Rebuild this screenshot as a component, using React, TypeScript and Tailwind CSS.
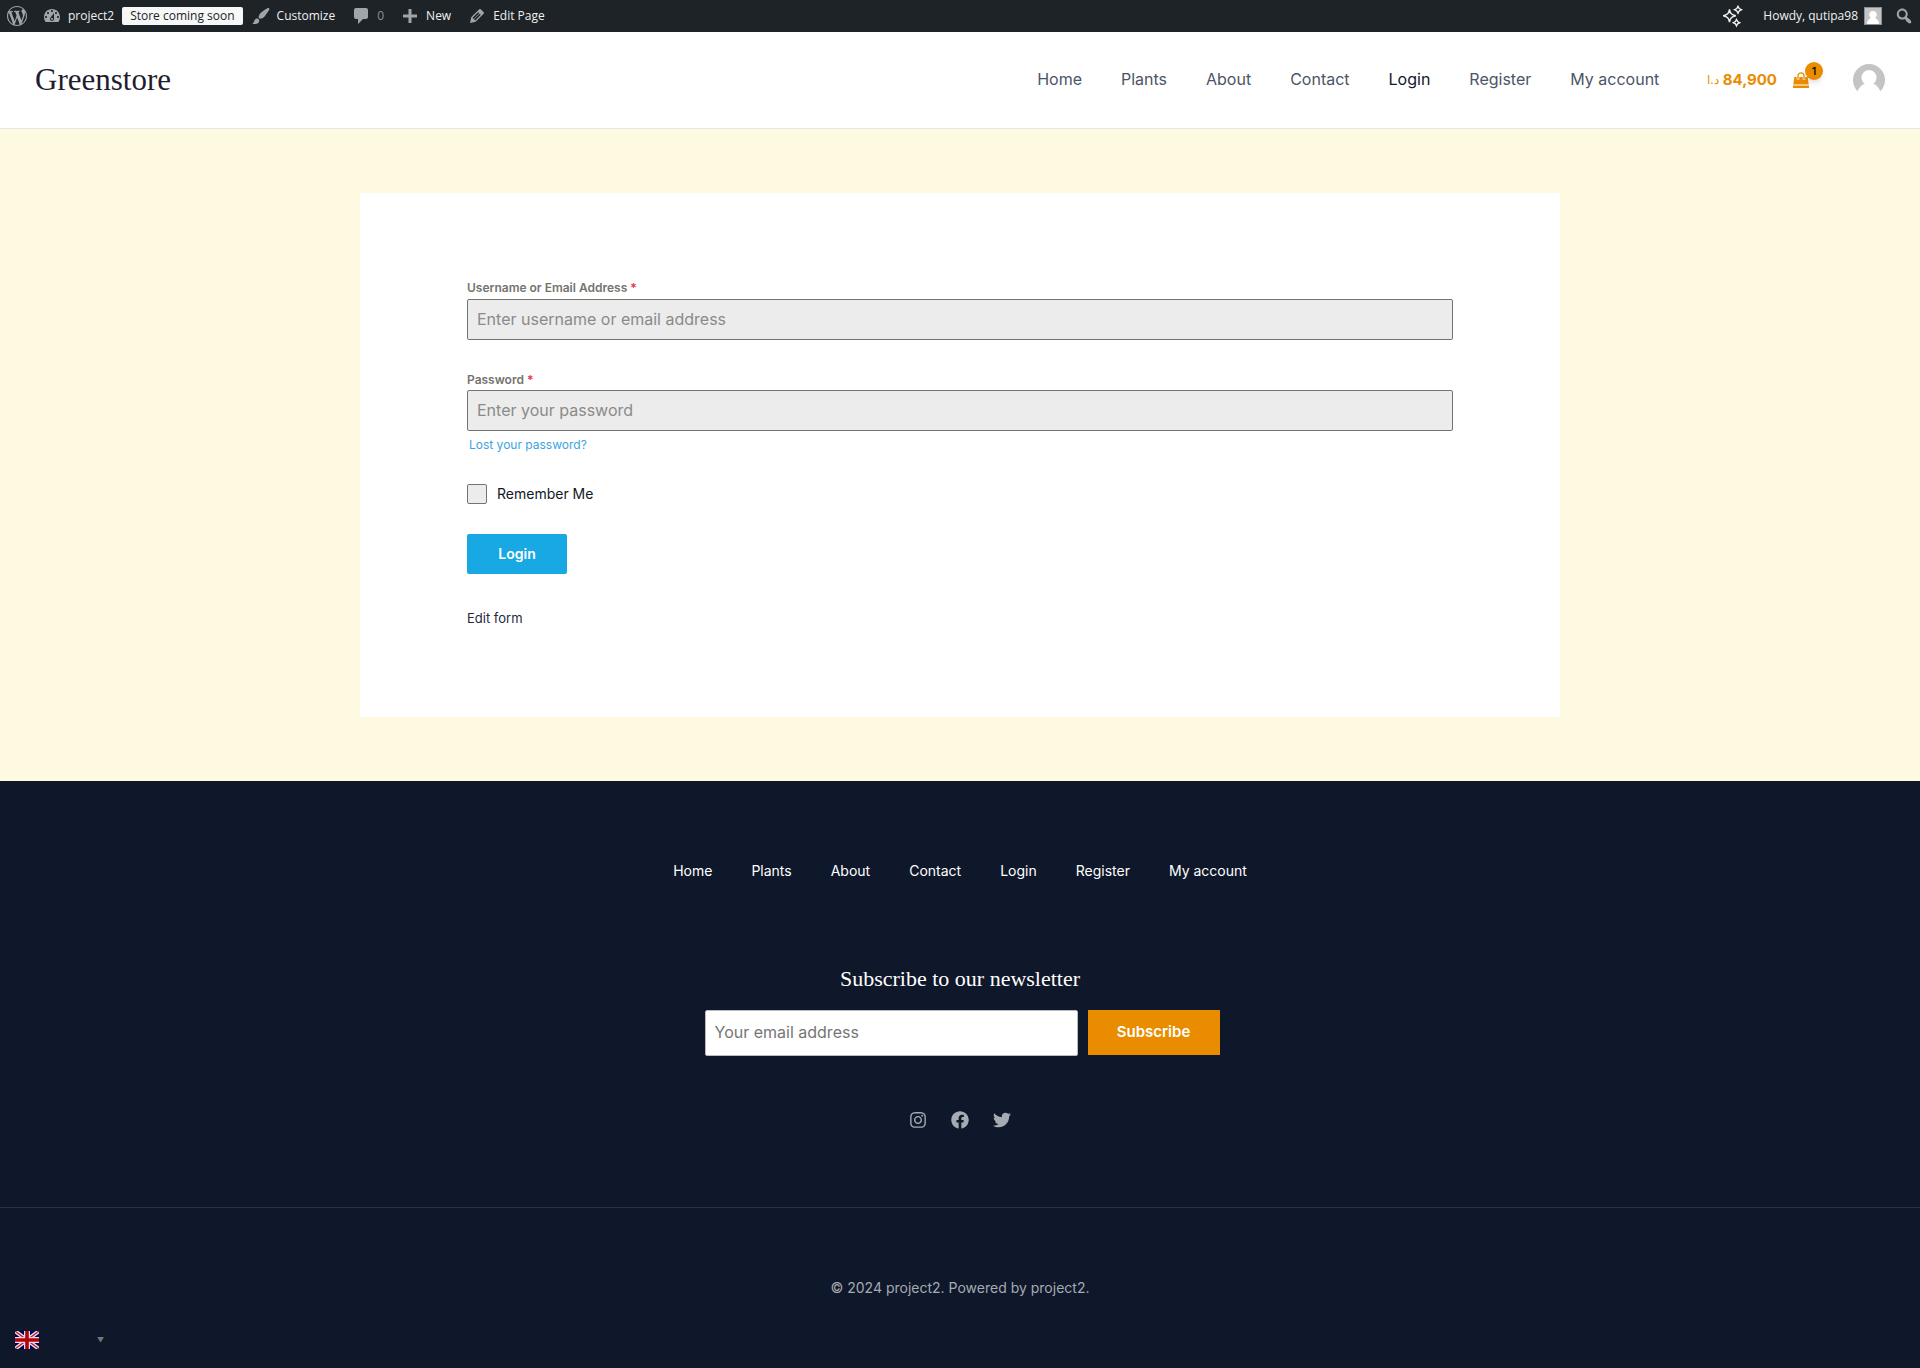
import React, { type ReactNode } from "react";
import { FaFacebook, FaInstagram, FaTwitter } from "react-icons/fa";

const PAGES = ["Home", "Plants", "About", "Contact", "Login", "Register", "My account"];

const ICONS = {
  wordpress:
    "M20 10c0-5.51-4.49-10-10-10C4.48 0 0 4.49 0 10c0 5.52 4.48 10 10 10 5.51 0 10-4.48 10-10zM7.78 15.37L4.37 6.22c.55-.02 1.17-.08 1.17-.08.5-.06.44-1.13-.06-1.11 0 0-1.45.11-2.37.11-.18 0-.37 0-.58-.01C4.12 2.69 6.87 1.11 10 1.11c2.33 0 4.45.87 6.05 2.34-.68-.11-1.65.39-1.65 1.58 0 .74.45 1.36.9 2.1.35.61.55 1.36.55 2.46 0 1.49-1.4 5-1.4 5l-3.03-8.37c.54-.02.82-.17.82-.17.5-.05.44-1.25-.06-1.22 0 0-1.44.12-2.38.12-.87 0-2.33-.12-2.33-.12-.5-.03-.56 1.2-.06 1.22l.92.08 1.26 3.41zM17.41 10c.24-.64.74-1.87.43-4.25.7 1.29 1.05 2.71 1.05 4.25 0 3.29-1.73 6.24-4.4 7.78.97-2.59 1.94-5.2 2.92-7.78zM6.1 18.09C3.12 16.65 1.11 13.53 1.11 10c0-1.3.23-2.48.72-3.59C3.25 10.3 4.67 14.2 6.1 18.09zm4.03-6.63l2.58 6.98c-.86.29-1.76.45-2.71.45-.79 0-1.57-.11-2.29-.33.81-2.38 1.62-4.74 2.42-7.1z",
  dashboard:
    "M3.76 16h12.48c1.1-1.37 1.76-3.11 1.76-5 0-4.42-3.58-8-8-8s-8 3.58-8 8c0 1.89.66 3.63 1.76 5zM10 4c.55 0 1 .45 1 1s-.45 1-1 1-1-.45-1-1 .45-1 1-1zM6 6c.55 0 1 .45 1 1s-.45 1-1 1-1-.45-1-1 .45-1 1-1zm8 0c.55 0 1 .45 1 1s-.45 1-1 1-1-.45-1-1 .45-1 1-1zm-5.37 5.55L12 7v6c0 1.1-.9 2-2 2s-2-.9-2-2c0-.57.24-1.08.63-1.45zM4 10c.55 0 1 .45 1 1s-.45 1-1 1-1-.45-1-1 .45-1 1-1zm12 0c.55 0 1 .45 1 1s-.45 1-1 1-1-.45-1-1 .45-1 1-1zm-5 3c0-.55-.45-1-1-1s-1 .45-1 1 .45 1 1 1 1-.45 1-1z",
  brush:
    "M18.33 3.57s.27-.8-.31-1.36c-.53-.52-1.22-.24-1.22-.24-.61.3-5.76 3.47-7.67 5.57-.86.96-2.06 3.79-1.09 4.82.92.98 3.96-.17 4.79-1 2.06-2.06 5.21-7.17 5.5-7.79zM1.4 17.65c2.37-1.56 1.46-3.41 3.23-4.64.93-.65 2.22-.62 3.08.29.63.67.8 2.57-.16 3.46-1.57 1.45-4 1.55-6.15.89z",
  comment: "M5 2h10c1.1 0 2 .9 2 2v7c0 1.1-.9 2-2 2h-3l-5 5v-5H5c-1.1 0-2-.9-2-2V4c0-1.1.9-2 2-2z",
  plus: "M17 8.500v3h-5.500v5.500h-3v-5.500H3v-3h5.500V3h3v5.500H17z",
  pencil:
    "M13.89 3.39l2.71 2.72c.46.46.42 1.24.03 1.64l-8.01 8.02-5.56 1.16 1.16-5.58s7.6-7.63 7.99-8.03c.39-.39 1.22-.39 1.68.07zm-2.73 2.79l-5.59 5.61 1.11 1.11 5.54-5.65zm-2.97 8.23l5.58-5.6-1.07-1.08-5.59 5.6z",
  search:
    "M12.14 4.18c1.87 1.87 2.11 4.75.72 6.89.12.1.22.21.36.31.2.16.47.36.81.59.34.24.56.39.66.47.42.31.73.57.94.78.32.32.6.65.84 1 .25.35.44.69.59 1.04.14.35.21.68.18 1-.02.32-.14.59-.36.81s-.49.34-.81.36c-.31.02-.65-.04-.99-.19-.35-.14-.7-.34-1.04-.59-.35-.24-.68-.52-1-.84-.21-.21-.47-.52-.77-.93-.1-.13-.25-.35-.47-.66-.22-.32-.4-.57-.56-.78-.16-.2-.29-.35-.44-.5-2.07 1.09-4.69.76-6.44-.98-2.14-2.15-2.14-5.64 0-7.78 2.15-2.15 5.63-2.15 7.78 0zm-1.41 6.36c1.36-1.37 1.36-3.58 0-4.95-1.37-1.37-3.59-1.37-4.95 0-1.37 1.37-1.37 3.58 0 4.95 1.36 1.37 3.58 1.37 4.95 0z",
};

function Glyph({ name }: { name: keyof typeof ICONS }) {
  return (
    <svg viewBox="0 0 20 20" className="size-5 shrink-0 fill-[#a0a5aa]" aria-hidden="true">
      <path d={ICONS[name]} />
    </svg>
  );
}

function BarLink({ icon, label, children }: { icon: keyof typeof ICONS; label?: string; children?: ReactNode }) {
  return (
    <a href="#" aria-label={label} className="flex items-center gap-1.5">
      <Glyph name={icon} />
      {children}
    </a>
  );
}

function AdminBar() {
  return (
    <div className="flex h-8 items-center justify-between bg-[#1d2327] pr-1.5 pl-[7px] font-['Open_Sans',sans-serif] text-xs text-[#f0f0f1]">
      <div className="flex items-center">
        <BarLink icon="wordpress" label="About WordPress" />
        <div className="ml-[15px]">
          <BarLink icon="dashboard">project2</BarLink>
        </div>
        <a href="#" className="ml-2 flex h-[18px] items-center rounded-xs bg-[#f6f7f7] px-2 text-[#1d2327]">
          Store coming soon
        </a>
        <div className="ml-2 flex items-center gap-4">
          <BarLink icon="brush">Customize</BarLink>
          <BarLink icon="comment">
            <span className="text-[#8c9196]">0</span>
          </BarLink>
          <BarLink icon="plus">New</BarLink>
          <BarLink icon="pencil">Edit Page</BarLink>
        </div>
      </div>
      <div className="flex items-center">
        <button type="button" aria-label="Assistant">
          <svg viewBox="0 0 24 24" className="size-6 fill-none stroke-[#f0f0f1] stroke-[1.4]" aria-hidden="true">
            <path d="M9.500 5.500c.8 4 2 5.400 6.300 6.300-4.300.9-5.500 2.300-6.300 6.300-.8-4-2-5.400-6.300-6.300 4.300-.9 5.500-2.300 6.300-6.300z" />
            <path d="M18 2.200l1.200 2.300 2.300 1.200-2.300 1.200L18 9.200l-1.200-2.300-2.300-1.200 2.300-1.200z" />
            <path d="M16.500 15.500l1.100 2.100 2.100 1.100-2.100 1.100-1.100 2.100-1.100-2.100-2.100-1.100 2.100-1.100z" />
          </svg>
        </button>
        <a href="#" className="ml-[19px] flex items-center gap-1.5">
          Howdy, qutipa98
          <Avatar className="size-[18px] border border-[#8c8f94] bg-[#c3c4c7]" square />
        </a>
        <button type="button" aria-label="Search" className="ml-3">
          <Glyph name="search" />
        </button>
      </div>
    </div>
  );
}

function Avatar({ className, square }: { className: string; square?: boolean }) {
  return (
    <svg viewBox="0 0 32 32" className={className} aria-hidden="true">
      <rect width="32" height="32" rx={square ? 0 : 16} fill="#c4c4c4" />
      <path
        fill="#fff"
        d="M16 6a7.500 7.500 0 0 0-7.500 7.500c0 2.800 1.300 5 3.300 6.300C8 21 5.500 25 4.300 28V32h23.400v-4c-1.200-3-3.700-7-7.500-8.200 2-1.300 3.300-3.500 3.300-6.300A7.500 7.500 0 0 0 16 6z"
      />
    </svg>
  );
}

function Header() {
  return (
    <header className="flex h-[97px] items-center justify-between border-b border-[#e2e5ea] bg-white px-[35px]">
      <a href="#" className="font-['Liberation_Serif',serif] text-[31px] text-[#1e1e2e]">
        Greenstore
      </a>
      <div className="flex items-center">
        <nav className="flex gap-[39px] pb-0.5 text-base text-[#4b5566]">
          {PAGES.map((page) => (
            <a key={page} href="#" className={page === "Login" ? "text-[#0f172a]" : ""}>
              {page}
            </a>
          ))}
        </nav>
        <a href="#" className="ml-12 flex items-center gap-4 text-[15px] font-bold text-[#ea8c00]" aria-label="View cart">
          <span className="flex items-center gap-1">
            <span className="text-xs font-normal">د.ا</span>84,900
          </span>
          <span className="relative">
            <svg viewBox="0 0 16 16" className="size-4 fill-[#ea8c00]" aria-hidden="true">
              <path d="M1.300 5h13.400l1 7.500H.3z" />
              <path d="M0 13.500h16V16H0z" />
              <path d="M5 7.500V3.800a3 3 0 0 1 6 0v3.700" fill="none" stroke="#fff" strokeWidth="2.600" />
              <path d="M5 7V3.800a3 3 0 0 1 6 0V7" fill="none" stroke="#ea8c00" strokeWidth="1.300" />
            </svg>
            <span className="absolute -top-2.5 left-3 flex size-[18px] items-center justify-center rounded-full bg-[#ea8c00] text-[11px] font-medium text-black shadow-md">
              1
            </span>
          </span>
        </a>
        <a href="#" aria-label="My profile" className="ml-11">
          <Avatar className="size-8" />
        </a>
      </div>
    </header>
  );
}

const FIELD =
  "block h-[41px] w-full rounded-xs border border-[#74746e] bg-[#ececec] px-[9px] pb-0.5 text-base text-[#333] placeholder:text-[#8a8a8a]";

function LoginForm() {
  return (
    <form className="px-[107px] pt-[87px] pb-[89px]">
      <label htmlFor="user" className="block pb-1 text-xs leading-[15px] font-semibold text-[#74746e]">
        Username or Email Address <span className="text-[#e5344f]">*</span>
      </label>
      <input id="user" type="text" placeholder="Enter username or email address" className={FIELD} />
      <label htmlFor="pass" className="mt-8 block pb-[3px] text-xs leading-[15px] font-semibold text-[#74746e]">
        Password <span className="text-[#e5344f]">*</span>
      </label>
      <input id="pass" type="password" placeholder="Enter your password" className={FIELD} />
      <a href="#" className="mt-1.5 ml-0.5 block w-fit text-xs text-[#3ba4e2]">
        Lost your password?
      </a>
      <label className="mt-[31px] flex w-fit items-center gap-2.5 text-sm text-[#111827]">
        <input type="checkbox" className="size-5 appearance-none rounded-xs border border-[#74746e] bg-[#ececec]" />
        Remember Me
      </label>
      <button type="submit" className="mt-[30px] block h-10 w-[100px] rounded-xs bg-[#18a8e4] text-sm font-semibold text-white">
        Login
      </button>
      <a href="#" className="mt-[34px] block w-fit text-[13px] leading-5 text-[#1e293b]">
        Edit form
      </a>
    </form>
  );
}

function UnionFlag() {
  return (
    <svg viewBox="0 0 24 18" className="h-[18px] w-6" aria-hidden="true">
      <rect width="24" height="18" fill="#00005f" />
      <path d="M0 0l24 18M24 0L0 18" stroke="#e0e0e6" strokeWidth="4" />
      <path d="M0 0l24 18M24 0L0 18" stroke="#c01020" strokeWidth="1.200" />
      <path d="M12 0v18M0 9h24" stroke="#e0e0e6" strokeWidth="6" />
      <path d="M12 0v18M0 9h24" stroke="#b8000c" strokeWidth="3.600" />
    </svg>
  );
}

function Footer() {
  return (
    <footer className="bg-[#0f172a] text-white">
      <nav className="flex justify-center gap-[39px] pt-20 text-sm">
        {PAGES.map((page) => (
          <a key={page} href="#">
            {page}
          </a>
        ))}
      </nav>
      <form className="mt-[81px] flex flex-col items-center">
        <h2 className="font-['Liberation_Serif',serif] text-[22px] leading-[34px]">Subscribe to our newsletter</h2>
        <div className="mt-3.5 flex w-full items-start justify-center gap-2.5 pl-1">
          <input
            type="email"
            aria-label="Your email address"
            placeholder="Your email address"
            className="h-[46px] w-[373px] rounded-xs border border-[#bbb] bg-white px-[9px] pb-0.5 text-base text-[#333] placeholder:text-[#757575]"
          />
          <button type="submit" className="h-[45px] w-[132px] bg-[#ea8c00] text-[15px] font-semibold">
            Subscribe
          </button>
        </div>
      </form>
      <div className="mt-[55px] flex justify-center gap-6 text-[#a6aab2]">
        <a href="#" aria-label="Instagram">
          <FaInstagram size={18} />
        </a>
        <a href="#" aria-label="Facebook">
          <FaFacebook size={18} />
        </a>
        <a href="#" aria-label="Twitter">
          <FaTwitter size={18} />
        </a>
      </div>
      <div className="mt-[78px] border-t border-[#2a3242] pt-[70px] text-center text-sm text-[#a6aab2]">
        © 2024 project2. Powered by project2.
      </div>
      <div className="px-[15px] pt-[33px] pb-[19px]">
        <button type="button" aria-label="Choose language" className="flex items-center gap-[58px]">
          <UnionFlag />
          <span className="text-[7px] leading-none text-[#777]">▼</span>
        </button>
      </div>
    </footer>
  );
}

export default function App() {
  return (
    <div className="min-h-screen bg-[#0f172a] font-[Inter,sans-serif]">
      <AdminBar />
      <Header />
      <main className="bg-[#fef9e1] px-6 py-16">
        <section className="mx-auto max-w-[1200px] bg-white">
          <LoginForm />
        </section>
      </main>
      <Footer />
    </div>
  );
}
